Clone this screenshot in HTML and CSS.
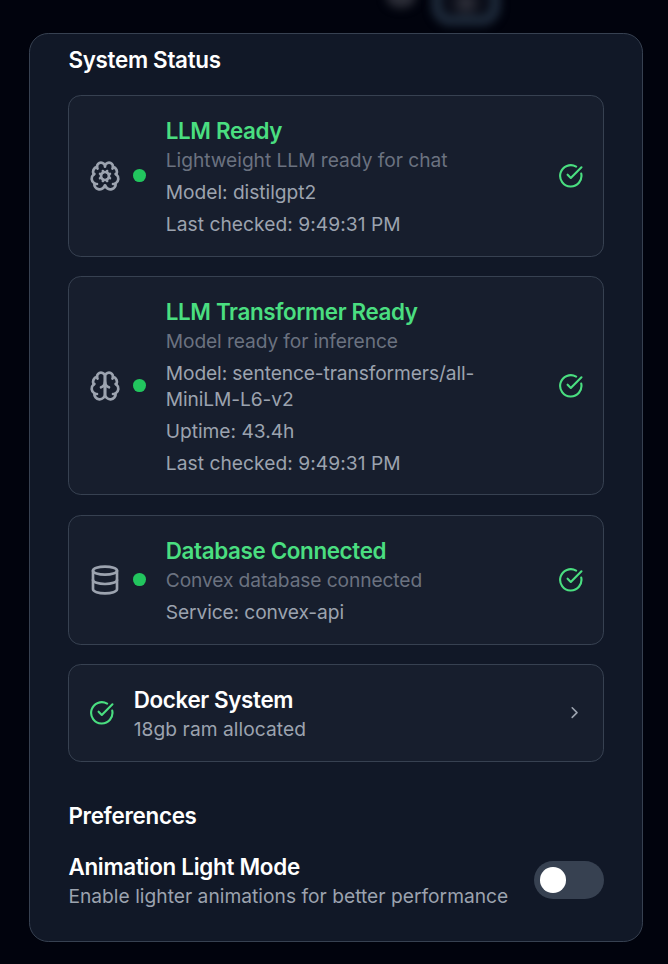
FILE: index.html
```html
<!DOCTYPE html>
<html lang="en">
<head>
<meta charset="utf-8">
<title>System Status</title>
<link rel="stylesheet" href="styles.css">
</head>
<body>
<svg class="sprite" aria-hidden="true">
  <symbol id="check" viewBox="0 0 24 24"><path d="M21.801 10A10 10 0 1 1 17 3.335"/><path d="m9 11 3 3L22 4"/></symbol>
</svg>
<div class="backdrop"><div class="glow"></div><div class="glow-box"></div></div>
<main class="panel">
  <h2 class="heading">System Status</h2>
  <div class="cards">
    <section class="card">
      <svg class="icon" viewBox="0 0 24 24"><path d="M12 5a3 3 0 1 0-5.997.142 4 4 0 0 0-2.526 5.77 4 4 0 0 0 .556 6.588 4 4 0 0 0 7.636 2.106 3.2 3.2 0 0 0 .164-.546c.028-.13.306-.13.335 0a3.2 3.2 0 0 0 .163.546 4 4 0 0 0 7.636-2.106 4 4 0 0 0 .556-6.588 4 4 0 0 0-2.526-5.77A3 3 0 1 0 12 5"/><path d="M17.599 6.5a3 3 0 0 0 .399-1.375M6.003 5.125A3 3 0 0 0 6.401 6.5M3.477 10.896a4 4 0 0 1 .585-.396M19.938 10.5a4 4 0 0 1 .585.396M6 18a4 4 0 0 1-1.967-.516M19.967 17.484A4 4 0 0 1 18 18"/><circle cx="12" cy="12" r="3"/><path d="m15.7 10.4-.9.4m-5.6 2.4-.9.4m5.3 2.1-.4-.9m-2.4-5.6-.4-.9m5.3 5.3-.9-.4m-5.6-2.4-.9-.4m2.1 5.3.4-.9m2.4-5.6.4-.9"/></svg>
      <span class="dot"></span>
      <div class="body">
        <h3 class="title ok">LLM Ready</h3>
        <p class="line muted">Lightweight LLM ready for chat</p>
        <p class="line spaced">Model: distilgpt2</p>
        <p class="line spaced loose">Last checked: 9:49:31 PM</p>
      </div>
      <svg class="check"><use href="#check"/></svg>
    </section>
    <section class="card">
      <svg class="icon" viewBox="0 0 24 24"><path d="M12 5a3 3 0 1 0-5.997.125 4 4 0 0 0-2.526 5.77 4 4 0 0 0 .556 6.588A4 4 0 1 0 12 18Z"/><path d="M12 5a3 3 0 1 1 5.997.125 4 4 0 0 1 2.526 5.77 4 4 0 0 1-.556 6.588A4 4 0 1 1 12 18Z"/><path d="M15 13a4.5 4.5 0 0 1-3-4 4.5 4.5 0 0 1-3 4M17.599 6.5a3 3 0 0 0 .399-1.375M6.003 5.125A3 3 0 0 0 6.401 6.5M3.477 10.896a4 4 0 0 1 .585-.396M19.938 10.5a4 4 0 0 1 .585.396M6 18a4 4 0 0 1-1.967-.516M19.967 17.484A4 4 0 0 1 18 18"/></svg>
      <span class="dot"></span>
      <div class="body">
        <h3 class="title ok">LLM Transformer Ready</h3>
        <p class="line muted tight">Model ready for inference</p>
        <p class="line spaced tight">Model: sentence-transformers/all-<br>MiniLM-L6-v2</p>
        <p class="line spaced">Uptime: 43.4h</p>
        <p class="line spaced loose">Last checked: 9:49:31 PM</p>
      </div>
      <svg class="check"><use href="#check"/></svg>
    </section>
    <section class="card">
      <svg class="icon" viewBox="0 0 24 24"><ellipse cx="12" cy="5" rx="9" ry="3"/><path d="M3 5v14a9 3 0 0 0 18 0V5"/><path d="M3 12a9 3 0 0 0 18 0"/></svg>
      <span class="dot"></span>
      <div class="body">
        <h3 class="title ok">Database Connected</h3>
        <p class="line muted tight">Convex database connected</p>
        <p class="line spaced tight">Service: convex-api</p>
      </div>
      <svg class="check"><use href="#check"/></svg>
    </section>
    <section class="card docker">
      <svg class="check"><use href="#check"/></svg>
      <div class="body">
        <h3 class="title">Docker System</h3>
        <p class="line loose">18gb ram allocated</p>
      </div>
      <svg class="chevron" viewBox="0 0 24 24"><path d="m9 18 6-6-6-6"/></svg>
    </section>
  </div>
  <h2 class="heading prefs">Preferences</h2>
  <div class="setting">
    <div class="setting-text">
      <h3 class="title">Animation Light Mode</h3>
      <p class="line">Enable lighter animations for better performance</p>
    </div>
    <button class="toggle" role="switch" aria-checked="false" aria-label="Animation Light Mode"><span class="knob"></span></button>
  </div>
</main>
</body>
</html>
```
FILE: styles.css
```css
* { box-sizing: border-box; }
body {
  margin: 0;
  height: 964px;
  padding: 33px 25px 22px 29px;
  overflow: hidden;
  background: #01030d;
  font-family: Inter, "Liberation Sans", sans-serif;
  color: #9ca3af;
}
h2, h3, p { margin: 0; }
svg {
  fill: none;
  stroke: currentColor;
  stroke-width: 2;
  stroke-linecap: round;
  stroke-linejoin: round;
  flex: none;
}
.sprite { position: absolute; width: 0; height: 0; }
.backdrop { position: absolute; inset: 0; overflow: hidden; }
.glow {
  position: absolute;
  left: 386px;
  top: -16px;
  width: 30px;
  height: 24px;
  border-radius: 50%;
  background: #2b2d37;
  filter: blur(5px);
}
.glow-box {
  position: absolute;
  left: 431px;
  top: -34px;
  width: 70px;
  height: 60px;
  border: 11px solid #1b2737;
  border-radius: 20px;
  background: radial-gradient(circle at 50% 68%, #34353f 0, #090c17 16px);
  filter: blur(4px);
}
.panel {
  position: relative;
  width: 614px;
  height: 909px;
  padding: 9.6px 38px 0 38.4px;
  border: 1px solid #374151;
  border-radius: 19.2px;
  background: #111827;
}
.heading {
  font-size: 22.4px;
  line-height: 32px;
  font-weight: 600;
  letter-spacing: -0.29px;
  color: #fff;
}
.cards { display: flex; flex-direction: column; gap: 19.2px; margin-top: 19.2px; }
.card {
  display: flex;
  align-items: center;
  padding: 19.2px;
  border: 1px solid #374151;
  border-radius: 12.8px;
  background: #171e2d;
}
.icon { width: 32px; height: 32px; margin-right: 12.8px; }
.dot { flex: none; width: 12.8px; height: 12.8px; margin-right: 19.6px; border-radius: 50%; background: #22c55e; }
.body { flex: 1; min-width: 0; margin-bottom: -1.2px; white-space: nowrap; }
.title { margin-bottom: 1.2px; font-size: 22.4px; line-height: 32px; font-weight: 570; letter-spacing: -0.36px; color: #fff; }
.ok { color: #4ade80; }
.line { font-size: 19.2px; line-height: 25.6px; letter-spacing: -0.03px; }
.tight { letter-spacing: -0.11px; }
.loose { letter-spacing: 0.05px; }
.muted { color: #6b7280; }
.spaced { margin-top: 6.4px; }
.check { width: 25.6px; height: 25.6px; color: #4ade80; }
.docker .check { margin-right: 19.6px; }
.chevron { width: 19.2px; height: 19.2px; }
.prefs { margin-top: 38.4px; }
.setting { display: flex; align-items: center; justify-content: space-between; margin-top: 19.2px; }
.setting-text { margin-bottom: -1.2px; white-space: nowrap; }
.setting-text .title { letter-spacing: -0.27px; }
.setting-text .line { letter-spacing: 0.02px; }
.toggle {
  display: flex;
  align-items: center;
  flex: none;
  width: 70px;
  height: 38.4px;
  padding: 0 6.4px;
  border: 0;
  border-radius: 20px;
  background: #374151;
}
.knob { width: 25.6px; height: 25.6px; border-radius: 50%; background: #fff; }
```
